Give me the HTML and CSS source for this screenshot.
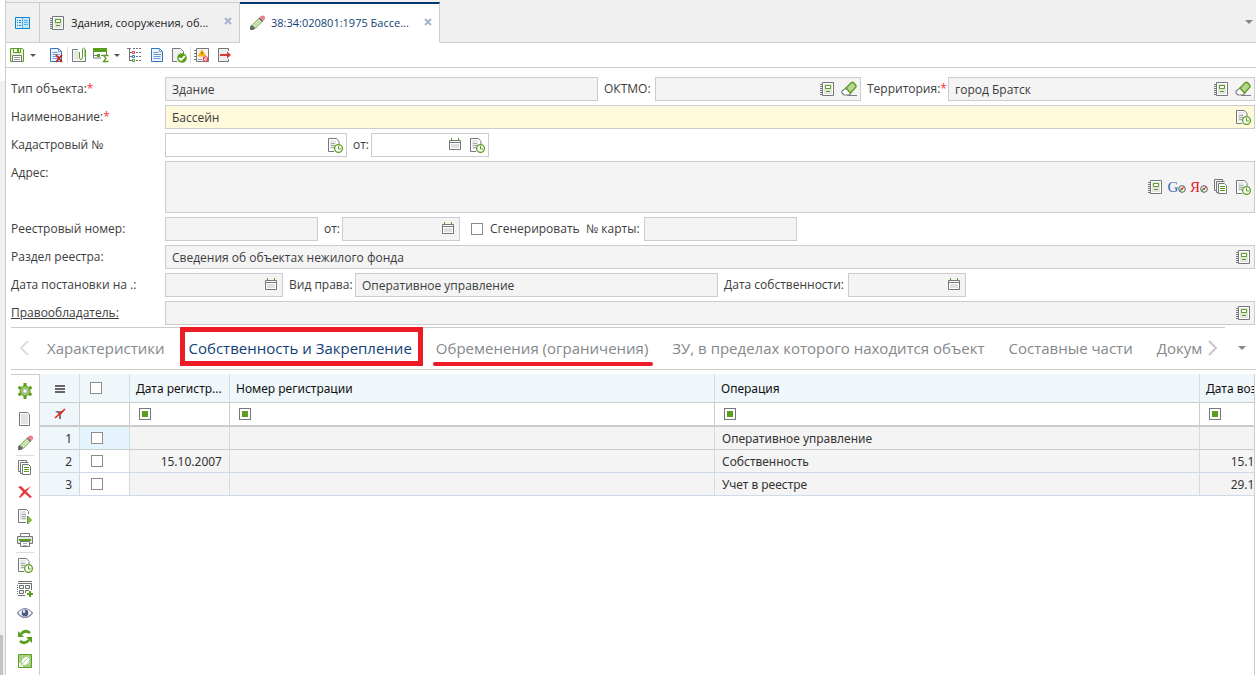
FILE: index.html
```
<!DOCTYPE html>
<html lang="ru">
<head>
<meta charset="utf-8">
<title>38:34:020801:1975 Бассейн</title>
<link rel="stylesheet" href="styles.css">
</head>
<body>
<svg class="sprite" aria-hidden="true">
  <symbol id="book" viewBox="0 0 16 16"><path d="M3.500 1.500h11v13h-11z" fill="#fff" stroke="#75787b"/><path d="M5 3h8v10H5z" fill="#e3e3e3"/><path d="M1 3.500h2M1 5.500h2M1 7.500h2M1 9.500h2M1 11.500h2M1 13.500h2" stroke="#75787b"/><path d="M6.500 4.500h5v3h-5z" fill="#fff" stroke="#5a9e1e"/><path d="M7 10.500h4" stroke="#5a9e1e"/></symbol>
  <symbol id="eraser" viewBox="0 0 16 16"><path d="M6 14.500h10" stroke="#7b7e82"/><path d="M5 7l5 5-2 2H3L1 12v-2z" fill="#fff" stroke="#7b7e82" stroke-width="1.200"/><path d="M5 7l5.500-5.500h2l2.500 3v1.500l-5.500 6z" fill="#b4d68d" stroke="#5a9e1e" stroke-width="1.300"/></symbol>
  <symbol id="clockdoc" viewBox="0 0 16 16"><path d="M1.500 1.500h8l2 2.500v10h-10z" fill="#fff"/><path d="M7 14.500H1.500v-13h8l2.500 3V7" fill="none" stroke="#75787b"/><path d="M3 3h6v9H3z" fill="#e8e8e8"/><path d="M4 6.500h4M4 8.500h5M4 10.500h3" stroke="#a9abae"/><circle cx="11.500" cy="11.500" r="3.900" fill="#fff" stroke="#5a9e1e" stroke-width="1.300"/><path d="M11.500 9v3h2.500" fill="none" stroke="#5a9e1e"/></symbol>
  <symbol id="cal" viewBox="0 0 16 16"><path d="M2.500 3.500h11v9h-11z" fill="#fff" stroke="#75787b"/><path d="M2 5.500h12" stroke="#75787b"/><path d="M4 7h8v4H4z" fill="#e0e0e0"/><path d="M4.500 1v2M11.500 1v2" stroke="#5a9e1e"/></symbol>
  <symbol id="copy" viewBox="0 0 16 16"><path d="M3 11.500H1.500v-11h8V2M5 13.500H3.500v-11h8" fill="none" stroke="#75787b"/><path d="M5.500 4.500h6l2 2v8h-8z" fill="#fff" stroke="#75787b"/><path d="M7 7.500h5M7 9.500h5M7 11.500h5" stroke="#5a9e1e"/></symbol>
  <symbol id="pencil" viewBox="0 0 16 16"><path d="M3 10.500l7.500-7.500 3 3L6 13.500z" fill="#e6f3d8" stroke="#5a9e1e"/><path d="M4.500 12L12 4.500" stroke="#5a9e1e" stroke-dasharray="1.500 1"/><path d="M1 15v-3.500l1.800-1.500 3.200 3.200L4.500 15z" fill="#6c6c6c"/><path d="M9.500 3.500l1-1 3.800 3.500-1 1z" fill="#6c6c6c"/><path d="M11 2.500L12.500 1h2L15.500 2v2L14 5.500z" fill="#f38391" stroke="#e2505f" stroke-width=".6"/></symbol>
  <symbol id="panel" viewBox="0 0 16 16"><path d="M.5 2.500h14v11H.5z" fill="#d5effa" stroke="#1584c7"/><path d="M8 3h6v10H8z" fill="#c5e9f8"/><path d="M9 5.500h4M9 7.500h4M9 9.500h4" stroke="#55aee0"/><path d="M2 5.500h1m1 0h2m-4 2h1m1 0h2m-4 3h1m1 0h2" stroke="#1584c7"/><path d="M7.500 3v10" stroke="#55aee0"/></symbol>
  <symbol id="save" viewBox="0 0 16 16"><path d="M1.500 1.500h12l1 1v12h-13z" fill="#e8f3dc" stroke="#5a9e1e"/><path d="M4.500 1.500h7v4h-7z" fill="#fff" stroke="#5a9e1e"/><path d="M8 2h2v3H8z" fill="#5a9e1e"/><path d="M3.500 8.500h9v6h-9z" fill="#fff" stroke="#75787b"/><path d="M5 10.500h6M5 12.500h6" stroke="#999"/></symbol>
  <symbol id="bluedoc" viewBox="0 0 16 16"><path d="M2.500 1.500h8l3 3v10h-11z" fill="#edf4fd" stroke="#3973bd"/><path d="M10.500 1.500v3h3M4.500 5.500h5M4.500 7.500h7M4.500 9.500h7M4.500 11.500h7" fill="none" stroke="#6d9bd5"/></symbol>
  <symbol id="clip" viewBox="0 0 16 16"><path d="M7 2.500H1.500v12h13V3" fill="none" stroke="#75787b"/><path d="M3 4h5v9H3z" fill="#e6e6e6"/><path d="M8.500 5v5q0 2.500 1.500 2.500t1.500-2.500V3q0-2 1-2t1.500 2v7" fill="none" stroke="#5a9e1e"/></symbol>
  <symbol id="sum" viewBox="0 0 16 16"><path d="M0 1h14v4H0z" fill="#5a9e1e"/><path d="M.5 5v6H8M1 8.500h4M13.500 5v3M8 8.500h2" fill="none" stroke="#75787b"/><path d="M4 7h3v3H4z" fill="#5a9e1e"/><path d="M15.500 8.500h-5l2.500 3-2.500 3h5" fill="none" stroke="#5a9e1e" stroke-width="1.300"/></symbol>
  <symbol id="tree" viewBox="0 0 16 16"><path d="M0 1.500h4M2.500 2v12M3 5.500h2M3 9.500h2M3 13.500h2" fill="none" stroke="#75787b"/><path d="M6 1.500h9M9 5.500h6M9 9.500h6M9 13.500h6" stroke="#75787b" stroke-dasharray="2 1"/><path d="M5.500 4.500h2v2h-2z" fill="#fff" stroke="#d43"/><path d="M5.500 8.500h2v2h-2z" fill="#fff" stroke="#27b"/><path d="M5.500 12.500h2v2h-2z" fill="#fff" stroke="#5a9e1e"/></symbol>
  <symbol id="checkdoc" viewBox="0 0 16 16"><path d="M6 14.500H1.500v-13h8l3 3V7" fill="#f2f2f2" stroke="#75787b"/><circle cx="11" cy="11" r="4.800" fill="#5a9e1e"/><path d="M8 11l2 2 4-4" fill="none" stroke="#fff" stroke-width="1.800"/></symbol>
  <symbol id="warn" viewBox="0 0 16 16"><path d="M2.500 1.500h12v13h-12z" fill="#f4f4f4" stroke="#75787b"/><path d="M0 3.500h3M0 6.500h3M0 9.500h3M0 12.500h3" stroke="#75787b"/><path d="M8 3l3.500 6h-7z" fill="#ffc928" stroke="#f0a800"/><path d="M8 5v3" stroke="#7b4a00"/><circle cx="11.500" cy="12" r="2.300" fill="#fff" stroke="#e23"/><path d="M10 10.500l3 3" stroke="#e23"/><path d="M4 12.500h4" stroke="#999"/></symbol>
  <symbol id="exit" viewBox="0 0 16 16"><path d="M12.500 4V1.500h-10v13h10V12" fill="#eee" stroke="#75787b"/><path d="M4 7h7V4.500L15 8l-4 3.500V9H4z" fill="#d33c35"/></symbol>
  <symbol id="gear" viewBox="0 0 16 16"><path d="M8 0v16M1.500 4l13 8M14.500 4l-13 8" stroke="#5a9e1e" stroke-width="3"/><circle cx="8" cy="8" r="5" fill="#9aca68" stroke="#5a9e1e"/><circle cx="8" cy="8" r="2.300" fill="#fff" stroke="#a0a3a6"/></symbol>
  <symbol id="page" viewBox="0 0 16 16"><path d="M2.500 1.500h8l2 2v11h-10z" fill="#fff" stroke="#75787b"/><path d="M4 3h6l1 1v9H4z" fill="#e2e2e2"/></symbol>
  <symbol id="cross" viewBox="0 0 16 16"><path d="M1 3l3-1 4 4 6-4-4.500 5.500L15 13l-2 1-5-4.500L3 14l-1-1 4-5.500z" fill="#e5393c"/></symbol>
  <symbol id="playdoc" viewBox="0 0 16 16"><path d="M9 14.500H1.500v-13h8l2 2V6" fill="#fff" stroke="#75787b"/><path d="M3 3h6v9H3z" fill="#e4e4e4"/><path d="M5 6.500h4M5 8.500h4M5 10.500h4" stroke="#a9abae"/><path d="M10.500 8l4 4-4 4z" fill="#8abd55" stroke="#5a9e1e"/></symbol>
  <symbol id="print" viewBox="0 0 16 16"><path d="M3.500 4V1.500h9V4" fill="#fff" stroke="#75787b"/><path d="M.5 4.500h15v7H.5z" fill="#e4e4e4" stroke="#75787b"/><path d="M2 7h12v2H2z" fill="#5a9e1e"/><path d="M3.500 9.500h9v5h-9z" fill="#fff" stroke="#75787b"/><path d="M6 11.500h4M6 13.500h4" stroke="#a9abae"/></symbol>
  <symbol id="addtable" viewBox="0 0 16 16"><path d="M1 .5h14M1 2.500h14M14.500 3v6M1 14.500h7" stroke="#6e7174"/><path d="M.5 4v10" stroke="#6e7174" stroke-dasharray="1 1"/><path d="M2.500 4.500h4v3h-4zm6 0h4v3h-4zm-6 5h4v3h-4zM12 9.500H8.500V12" fill="#eee" stroke="#6e7174"/><path d="M13 10v6M10 13h6" stroke="#5a9e1e" stroke-width="2"/></symbol>
  <symbol id="eye" viewBox="0 0 16 16"><path d="M.5 8Q8-1 15.500 8 8 17 .5 8z" fill="#fff" stroke="#858ba5" stroke-width="1.200"/><circle cx="8" cy="8" r="3.400" fill="#4f5a85"/><circle cx="7" cy="6.500" r="1.200" fill="#fff"/></symbol>
  <symbol id="refresh" viewBox="0 0 16 16"><path d="M13 4Q8 0 4 5" fill="none" stroke="#5a9e1e" stroke-width="2.800"/><path d="M1 2v6h6z" fill="#5a9e1e"/><path d="M3 12q5 4 9-1" fill="none" stroke="#5a9e1e" stroke-width="2.800"/><path d="M15 14V8H9z" fill="#5a9e1e"/></symbol>
  <symbol id="leaf" viewBox="0 0 16 16"><path d="M1.500 1.500h13v13h-13z" fill="#a8cf88" stroke="#5a9e1e"/><path d="M5 11Q4 7 7 5t5-1q1 5-2 7t-5 0z" fill="#fff"/><path d="M2 14V9l4 4v1z" fill="#fff"/><path d="M3 13L13 3" stroke="#a8cf88"/></symbol>
  <symbol id="geo" viewBox="0 0 8 8"><circle cx="4" cy="4" r="3.300" fill="#fff" stroke="#555"/><path d="M6.200 1.800L2.500 3.500l2 1.500z" fill="#e22"/><path d="M1.800 6.200L2.500 3.500l2 1.500z" fill="#0b2"/></symbol>
  <symbol id="filteroff" viewBox="0 0 16 16"><path d="M3 5h9L9 8.500V13H7V8.500z" fill="#75787b"/><path d="M3 12L13 3" stroke="#ff1a12" stroke-width="1.600"/></symbol>
</svg>

<div class="app">
  <div class="gutter"></div>
  <main class="main">
    <nav class="doctabs">
      <button class="doctab home" aria-label="Панель"><svg class="ic"><use href="#panel"/></svg></button>
      <div class="doctab"><svg class="ic"><use href="#book"/></svg><a href="#">Здания, сооружения, об...</a><button class="close" aria-label="Закрыть"><svg viewBox="0 0 8 8"><path d="M1 1l6 6M7 1L1 7"/></svg></button></div>
      <div class="doctab active"><svg class="ic"><use href="#pencil"/></svg><a href="#">38:34:020801:1975 Бассе...</a><button class="close" aria-label="Закрыть"><svg viewBox="0 0 8 8"><path d="M1 1l6 6M7 1L1 7"/></svg></button></div>
      <div class="rest"><button class="caret" aria-label="Список вкладок"></button></div>
    </nav>

    <div class="toolbar">
      <button aria-label="Сохранить"><svg class="ic"><use href="#save"/></svg></button>
      <button class="drop" aria-label="Варианты сохранения"><i class="tri"></i></button>
      <button aria-label="Удалить"><svg class="ic"><use href="#bluedoc"/><path d="M8 8l6 7M14 8l-6 7" stroke="#c9221d" stroke-width="1.800"/></svg></button>
      <i class="vsep"></i>
      <button aria-label="Вложения"><svg class="ic"><use href="#clip"/></svg></button>
      <button aria-label="Итоги"><svg class="ic"><use href="#sum"/></svg></button>
      <button class="drop slim" aria-label="Варианты итогов"><i class="tri"></i></button>
      <button aria-label="Дерево"><svg class="ic"><use href="#tree"/></svg></button>
      <button aria-label="Документ"><svg class="ic"><use href="#bluedoc"/></svg></button>
      <button aria-label="Проверить"><svg class="ic"><use href="#checkdoc"/></svg></button>
      <i class="vsep"></i>
      <button aria-label="Ошибки"><svg class="ic"><use href="#warn"/></svg></button>
      <button aria-label="Выход"><svg class="ic"><use href="#exit"/></svg></button>
    </div>

    <form class="form">
      <div class="row">
        <label class="lead" for="type">Тип объекта:<em>*</em></label>
        <div class="field g-type"><input id="type" value="Здание" readonly></div>
        <label class="l-oktmo" for="oktmo">ОКТМО:</label>
        <div class="field g-oktmo"><input id="oktmo" readonly><button type="button" aria-label="Выбрать"><svg class="ic"><use href="#book"/></svg></button><button type="button" aria-label="Очистить"><svg class="ic"><use href="#eraser"/></svg></button></div>
        <label class="l-terr" for="terr">Территория:<em>*</em></label>
        <div class="field g-terr"><input id="terr" value="город Братск" readonly><button type="button" aria-label="Выбрать"><svg class="ic"><use href="#book"/></svg></button><button type="button" aria-label="Очистить"><svg class="ic"><use href="#eraser"/></svg></button></div>
      </div>
      <div class="row">
        <label class="lead" for="name">Наименование:<em>*</em></label>
        <div class="field must"><input id="name" value="Бассейн"><button type="button" aria-label="История"><svg class="ic"><use href="#clockdoc"/></svg></button></div>
      </div>
      <div class="row">
        <label class="lead" for="cad">Кадастровый №</label>
        <div class="field edit w-cad"><input id="cad"><button type="button" aria-label="История"><svg class="ic"><use href="#clockdoc"/></svg></button></div>
        <label class="l-from" for="caddate">от:</label>
        <div class="field edit w-date"><input id="caddate"><button type="button" aria-label="Календарь"><svg class="ic"><use href="#cal"/></svg></button><button type="button" aria-label="История"><svg class="ic"><use href="#clockdoc"/></svg></button></div>
      </div>
      <div class="row">
        <label class="lead" for="addr">Адрес:</label>
        <div class="field tall"><textarea id="addr" readonly></textarea><button type="button" aria-label="Выбрать"><svg class="ic"><use href="#book"/></svg></button><button type="button" class="map google" aria-label="Карта Google">G<svg class="dot"><use href="#geo"/></svg></button><button type="button" class="map yandex" aria-label="Карта Яндекс">Я<svg class="dot"><use href="#geo"/></svg></button><button type="button" aria-label="Копировать"><svg class="ic"><use href="#copy"/></svg></button><button type="button" aria-label="История"><svg class="ic"><use href="#clockdoc"/></svg></button></div>
      </div>
      <div class="row">
        <label class="lead" for="reg">Реестровый номер:</label>
        <div class="field w-num"><input id="reg" readonly></div>
        <label class="l-from" for="regdate">от:</label>
        <div class="field w-date"><input id="regdate" readonly><button type="button" aria-label="Календарь"><svg class="ic"><use href="#cal"/></svg></button></div>
        <input type="checkbox" class="box gen" id="gen"><label class="l-gen" for="gen">Сгенерировать</label>
        <label class="l-card" for="card">№ карты:</label>
        <div class="field w-num"><input id="card" readonly></div>
      </div>
      <div class="row">
        <label class="lead" for="sect">Раздел реестра:</label>
        <div class="field"><input id="sect" value="Сведения об объектах нежилого фонда" readonly><button type="button" aria-label="Выбрать"><svg class="ic"><use href="#book"/></svg></button></div>
      </div>
      <div class="row">
        <label class="lead" for="put">Дата постановки на .:</label>
        <div class="field w-date"><input id="put" readonly><button type="button" aria-label="Календарь"><svg class="ic"><use href="#cal"/></svg></button></div>
        <label class="l-right" for="right">Вид права:</label>
        <div class="field w-right"><input id="right" value="Оперативное управление" readonly></div>
        <label class="l-own" for="own">Дата собственности:</label>
        <div class="field w-date"><input id="own" readonly><button type="button" aria-label="Календарь"><svg class="ic"><use href="#cal"/></svg></button></div>
      </div>
      <div class="row">
        <label class="lead" for="holder"><u>Правообладатель:</u></label>
        <div class="field"><input id="holder" readonly><button type="button" aria-label="Выбрать"><svg class="ic"><use href="#book"/></svg></button></div>
      </div>
    </form>

    <div class="sections">
      <button class="arrow dim" aria-label="Назад"><svg viewBox="0 0 10 16"><path d="M9 1L2 8l7 7"/></svg></button>
      <nav class="tabs">
        <a href="#">Характеристики</a>
        <a href="#" class="on">Собственность и Закрепление</a>
        <a href="#" class="marked">Обременения (ограничения)</a>
        <a href="#">ЗУ, в пределах которого находится объект</a>
        <a href="#">Составные части</a>
        <a href="#">Документы</a>
      </nav>
      <button class="arrow" aria-label="Вперёд"><svg viewBox="0 0 10 16"><path d="M1 1l7 7-7 7"/></svg></button>
      <button class="caret" aria-label="Список разделов"></button>
    </div>

    <section class="work">
      <div class="side">
        <button class="first" aria-label="Настройки"><svg class="ic"><use href="#gear"/></svg></button>
        <button aria-label="Создать"><svg class="ic"><use href="#page"/></svg></button>
        <button aria-label="Изменить"><svg class="ic"><use href="#pencil"/></svg></button>
        <i class="hsep"></i>
        <button aria-label="Копировать"><svg class="ic"><use href="#copy"/></svg></button>
        <button aria-label="Удалить"><svg class="ic"><use href="#cross"/></svg></button>
        <button aria-label="Выполнить"><svg class="ic"><use href="#playdoc"/></svg></button>
        <button aria-label="Печать"><svg class="ic"><use href="#print"/></svg></button>
        <i class="hsep"></i>
        <button aria-label="История"><svg class="ic"><use href="#clockdoc"/></svg></button>
        <button aria-label="Добавить"><svg class="ic"><use href="#addtable"/></svg></button>
        <button aria-label="Просмотр"><svg class="ic"><use href="#eye"/></svg></button>
        <button aria-label="Обновить"><svg class="ic"><use href="#refresh"/></svg></button>
        <button aria-label="Экспорт"><svg class="ic"><use href="#leaf"/></svg></button>
      </div>
      <div class="gridwrap">
        <table class="grid">
          <colgroup><col class="c-num"><col class="c-chk"><col class="c-date"><col class="c-wide"><col class="c-wide"><col class="c-date"></colgroup>
          <thead>
            <tr><th class="mid"><button class="burger" aria-label="Меню"></button></th><th class="pick"><input type="checkbox" class="box" aria-label="Выбрать все"></th><th>Дата регистр...</th><th>Номер регистрации</th><th>Операция</th><th>Дата возникн...</th></tr>
            <tr class="filter"><td class="mid tint"><button aria-label="Сбросить фильтр"><svg class="ic"><use href="#filteroff"/></svg></button></td><td></td><td><button class="cond" aria-label="Условие"></button></td><td><button class="cond" aria-label="Условие"></button></td><td><button class="cond" aria-label="Условие"></button></td><td><button class="cond" aria-label="Условие"></button></td></tr>
          </thead>
          <tbody>
            <tr class="current"><td class="num">1</td><td class="pick"><input type="checkbox" class="box" aria-label="Строка 1"></td><td></td><td></td><td>Оперативное управление</td><td></td></tr>
            <tr><td class="num">2</td><td class="pick"><input type="checkbox" class="box" aria-label="Строка 2"></td><td class="date">15.10.2007</td><td></td><td>Собственность</td><td class="date">15.10.2007</td></tr>
            <tr><td class="num">3</td><td class="pick"><input type="checkbox" class="box" aria-label="Строка 3"></td><td></td><td></td><td>Учет в реестре</td><td class="date">29.10.2007</td></tr>
          </tbody>
        </table>
      </div>
    </section>
  </main>
</div>
</body>
</html>
```
FILE: styles.css
```
* { box-sizing: border-box; }
body { margin: 0; font: 12px/16px "Open Sans", "Noto Sans", sans-serif; color: #3c3c3c; background: #fff; overflow: hidden; }
button { border: 0; padding: 0; background: none; font: inherit; display: flex; align-items: center; justify-content: center; }
a { color: inherit; text-decoration: none; }
em { color: #f33; font-style: normal; }
.sprite { display: none; }
.ic { width: 16px; height: 16px; display: block; flex: none; }
.app { display: flex; height: 100vh; }
.gutter { width: 5px; background: linear-gradient(#c2c2c2, #c2c2c2) 0 100% / 3px 40px no-repeat, linear-gradient(#fff, #fff) 0 0 / 5px 81px no-repeat, #f0f0f0; }
.main { flex: 1; min-width: 0; border-left: 1px solid #ccc; display: flex; flex-direction: column; }

.doctabs { display: flex; height: 43px; padding-top: 2px; background: #f0f0f0; color: #222; }
.doctab { width: 200px; display: flex; align-items: center; gap: 6px; padding: 0 7px 0 9px; border: solid #ccc; border-width: 1px 1px 1px 0; white-space: nowrap; font-size: 11px; }
.doctab a { flex: 1; }
.doctab.home { width: 34px; padding: 0; }
.doctab.active { background: #fff; color: #123f75; border-top: 2px solid #003a70; border-bottom-color: #fff; }
.close { align-self: flex-start; margin-top: 14px; }
.close svg { width: 8px; height: 8px; stroke: #a3b4cd; stroke-width: 2; }
.rest { flex: 1; border-bottom: 1px solid #ccc; display: flex; justify-content: flex-end; align-items: center; padding-right: 3px; }
.caret::before, .tri { content: ""; border: 4px solid transparent; border-top-color: #85888c; border-bottom-width: 0; }
.rest .caret { width: 8px; }

.toolbar { display: flex; align-items: center; height: 25px; padding-left: 3px; border-bottom: 1px solid #ccc; gap: 6px; }
.tri { border-width: 3px 3px 0; border-top-color: #555; }
.drop { width: 8px; margin: 0 5px 0 -2px; }
.slim { margin: 0 0 0 -2px; }
.toolbar .vsep { width: 1px; height: 16px; background: #ddd; margin: 0 -3px; }

.form { padding: 9px 1px 2px 5px; display: flex; flex-direction: column; gap: 4px; }
.row { display: flex; align-items: flex-start; }
.row label { line-height: 24px; white-space: nowrap; padding-left: 6px; flex: none; }
.row .lead { width: 154px; padding-left: 0; }
.row .l-oktmo { width: 57px; }
.row .l-terr { width: 87px; }
.row .l-from { width: 24px; }
.row .l-gen { width: 97px; padding-left: 7px; }
.row .l-card { width: 64px; }
.row .l-right { width: 72px; }
.row .l-own { width: 130px; }
.field { flex: 1 1 0; min-width: 0; height: 24px; display: flex; align-items: center; border: 1px solid #ccc; background: #f4f4f4; padding-right: 3px; gap: 6px; }
.field input, .field textarea { flex: 1; min-width: 0; width: 0; height: 22px; border: 0; padding: 1px 0 0 6px; background: none; font: inherit; color: inherit; outline: 0; resize: none; }
.g-type { flex-grow: 428; }
.g-oktmo { flex-grow: 201; }
.g-terr { flex-grow: 302; }
.w-cad { flex: none; width: 182px; }
.w-date { flex: none; width: 118px; }
.w-num { flex: none; width: 153px; }
.w-right { flex: none; width: 363px; }
.must { background: #fffadc; }
.edit { background: #fff; }
.tall { height: 52px; }
.map { font: 15px/16px "Liberation Serif", serif; width: 16px; }
.google { color: #3c68b8; }
.yandex { color: #e8141c; }
.dot { width: 8px; height: 8px; flex: none; margin-top: 4px; }
.box { appearance: none; width: 12px; height: 12px; margin: 0; border: 1px solid #8c8c8c; background: #fff; flex: none; display: block; }
.gen { margin: 6px 0 0 11px; }

.sections { display: flex; align-items: center; height: 43px; margin-left: 5px; border-bottom: 1px solid #ccc; background: linear-gradient(#ccc, #ccc) 0 0 / calc(100% - 31px) 1px no-repeat; }
.tabs { flex: 1; min-width: 0; display: flex; gap: 24px; margin: 0 6px 0 10px; height: 43px; font-size: 15px; line-height: 43px; color: #85888b; overflow: hidden; white-space: nowrap; padding-left: 1px; }
.tabs a { position: relative; flex: none; }
.tabs .on { color: #123f75; }
.tabs .on::after { content: ""; position: absolute; inset: 0 -11px 4px -9px; border: 5px solid #ed1c24; }
.tabs .marked::after { content: ""; position: absolute; left: -3px; right: -5px; bottom: 4px; height: 4px; border-radius: 2px; background: #ed1c24; }
.arrow { width: 10px; }
.arrow.dim { padding: 0 7px 0 8px; width: 25px; opacity: .6; }
.arrow svg { width: 10px; height: 16px; fill: none; stroke: #c8c8c8; stroke-width: 2; flex: none; }
.sections .caret { width: 38px; padding-left: 10px; }

.work { flex: 1; min-height: 0; display: flex; margin: 4px 1px 0 5px; }
.side { width: 29px; flex: none; border: solid #ccc; border-width: 1px 1px 0 0; display: flex; flex-direction: column; align-items: center; }
.side button { width: 28px; height: 24px; flex: none; }
.side .first { height: 32px; }
.hsep { width: 18px; height: 1px; flex: none; background: #ddd; }
.gridwrap { flex: 1; min-width: 0; overflow: hidden; border-right: 1px solid #ccc; }
.grid { table-layout: fixed; border-collapse: separate; border-spacing: 0; width: 1260px; color: #333; font-family: "Noto Sans", sans-serif; }
.c-num { width: 40px; }
.c-chk { width: 50px; }
.c-date { width: 100px; }
.c-wide { width: 485px; }
.grid th, .grid td { padding: 1px 7px 0; text-align: left; font-weight: normal; white-space: nowrap; overflow: hidden; border: solid #d0dbe8; border-width: 0 1px 1px 0; }
.grid th { height: 29px; padding: 1px 6px 0; background: #eff7fb; color: #111; border-bottom-color: #ccc; }
.grid .filter td { height: 24px; background: #fff; border-color: #ccc; border-bottom-width: 2px; padding: 0 9px; }
.grid .filter .tint { background: #eff7fb; padding: 0; }
.grid tbody td { height: 23px; background: #f4f4f4; }
.grid .current td { border-bottom-color: #ccc; }
.mid button { margin: 0 auto; }
.grid tbody .num { text-align: right; background: #eff7fb; }
.grid .pick { padding: 0 0 0 11px; }
.grid th.pick { padding-left: 10px; }
.grid tbody .pick { background: #fff; }
.grid .current .pick { background: #e5f3fd; }
.grid .date { text-align: right; }
.burger { width: 10px; height: 8px; border: solid #666; border-width: 2px 0; background: linear-gradient(#666, #666) 0 50% / 10px 2px no-repeat; }
.cond { width: 12px; height: 12px; border: 1px solid #75787b; background: #5a9e1e content-box; padding: 2px; }
```
